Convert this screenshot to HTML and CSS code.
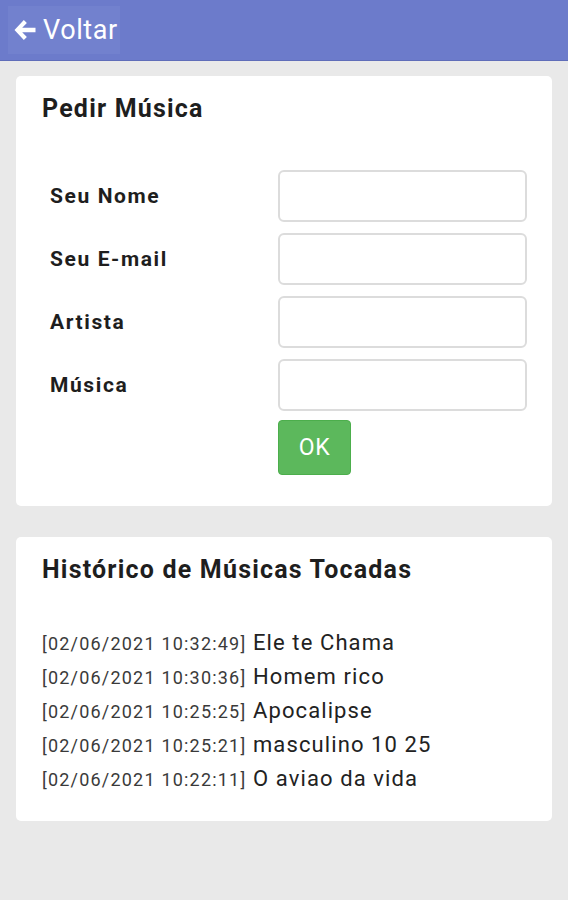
FILE: index.html
```html
<!DOCTYPE html>
<html lang="pt-br">
<head>
    <meta charset="UTF-8">
    <meta name="viewport" content="width=device-width, initial-scale=1.0">
    <title>Pedir Música</title>
    <link rel="stylesheet" href="styles.css">
</head>
<body>
    <div id="topo">
        <a class="voltar" href="#">
            <svg class="seta" viewBox="0 0 24 24" width="24" height="24">
                <path d="M11 3.5 L3 12 L11 20.5 L13.6 17.9 L9.6 13.9 L21 13.9 L21 10.1 L9.6 10.1 L13.6 6.1 Z" fill="#fff"/>
            </svg>
            Voltar
        </a>
    </div>

    <div class="card">
        <h2>Pedir Música</h2>
        <form class="form-pedido">
            <label>Seu Nome</label>
            <input type="text">
            <label>Seu E-mail</label>
            <input type="text">
            <label>Artista</label>
            <input type="text">
            <label>Música</label>
            <input type="text">
            <span></span>
            <div class="linha-btn"><button type="button" class="btn-ok">OK</button></div>
        </form>
    </div>

    <div class="card card-historico">
        <h2>Histórico de Músicas Tocadas</h2>
        <ul class="historico">
            <li><span class="hora">[02/06/2021 10:32:49]</span> Ele te Chama</li>
            <li><span class="hora">[02/06/2021 10:30:36]</span> Homem rico</li>
            <li><span class="hora">[02/06/2021 10:25:25]</span> Apocalipse</li>
            <li><span class="hora">[02/06/2021 10:25:21]</span> masculino 10 25</li>
            <li><span class="hora">[02/06/2021 10:22:11]</span> O aviao da vida</li>
        </ul>
    </div>
</body>
</html>
```

FILE: styles.css
```css
*{
    margin: 0;
    padding: 0;
    box-sizing: border-box;
}
body{
    background: #e9e9e9;
    font-family: Roboto, "Liberation Sans", sans-serif;
    color: #222;
    padding-bottom: 16px;
}
ul{
    list-style: none;
}
#topo{
    height: 61px;
    background: #6c7bcb;
    border-bottom: 1px solid #5f6db9;
    padding: 6px 8px;
}
.voltar{
    display: inline-flex;
    align-items: center;
    gap: 4px;
    height: 48px;
    padding: 0 2px 0 3px;
    background: #7281ce;
    color: #fff;
    text-decoration: none;
    font-size: 27px;
    letter-spacing: 0.6px;
}
.seta{
    width: 28px;
    height: 28px;
}
/* cartões */
.card{
    background: #fff;
    margin: 15px 16px 31px;
    border-radius: 5px;
    padding: 18px 26px 31px;
}
.card-historico{
    padding-bottom: 25px;
}
.card h2{
    font-size: 25px;
    font-weight: bold;
    color: #1e1e1e;
    line-height: 30px;
    letter-spacing: 1.2px;
}
.form-pedido{
    display: grid;
    grid-template-columns: 228px 1fr;
    row-gap: 11px;
    align-items: center;
    margin-top: 46px;
    padding-left: 8px;
}
.form-pedido label{
    font-size: 21px;
    font-weight: bold;
    color: #1e1e1e;
    letter-spacing: 1.6px;
}
.form-pedido input{
    height: 52px;
    width: 249px;
    border: 2px solid #dcdcdc;
    border-radius: 6px;
    background: #fff;
}
.linha-btn{
    margin-top: -2px;
}
.btn-ok{
    width: 73px;
    height: 55px;
    background: #5cb85c;
    border: 1px solid #4cae4c;
    border-radius: 4px;
    color: #fff;
    font-family: Roboto, "Liberation Sans", sans-serif;
    font-size: 23px;
    letter-spacing: 0.5px;
}
.historico{
    margin-top: 41px;
}
.historico li{
    height: 34px;
    font-size: 22px;
    line-height: 34px;
    letter-spacing: 1.1px;
    color: #222;
}
.hora{
    font-size: 18px;
    line-height: 1;
    letter-spacing: 1.2px;
    color: #3a3a3a;
}
```
